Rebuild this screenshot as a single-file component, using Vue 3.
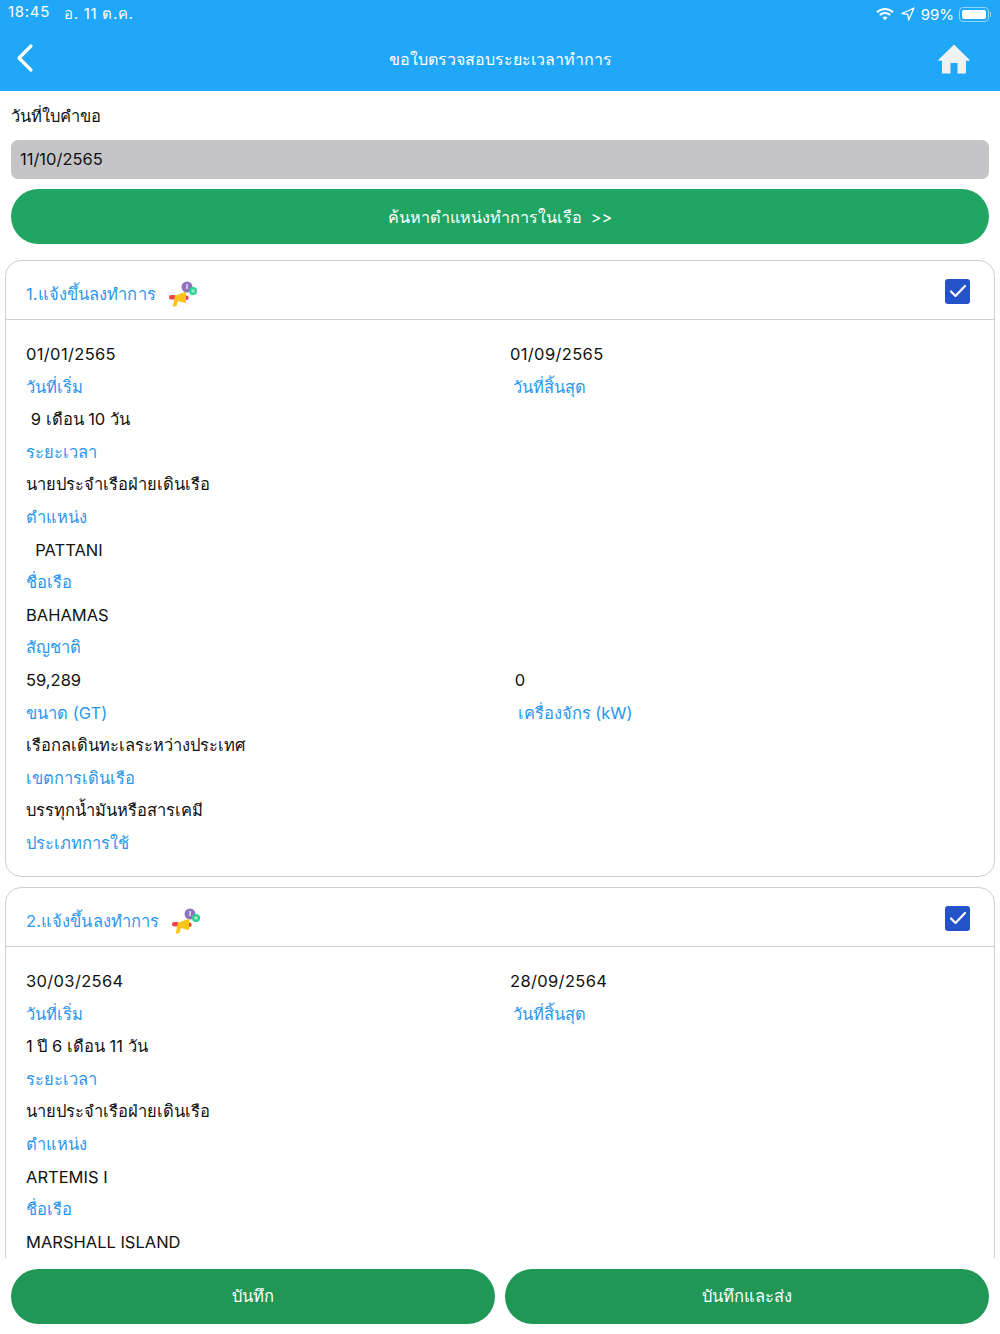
<script setup>
const isDate = (t) => /^\d\d\/\d\d\/\d{4}$/.test(t)
const cards = [
  {
    title: '1.แจ้งขึ้นลงทำการ',
    rows: [
      { l: ['01/01/2565', 'วันที่เริ่ม'], r: ['01/09/2565', 'วันที่สิ้นสุด'] },
      { l: ['\u00a09 เดือน 10 วัน', 'ระยะเวลา'] },
      { l: ['นายประจำเรือฝ่ายเดินเรือ', 'ตำแหน่ง'] },
      { l: ['\u00a0\u00a0PATTANI', 'ชื่อเรือ'] },
      { l: ['BAHAMAS', 'สัญชาติ'] },
      { l: ['59,289', 'ขนาด (GT)'], r: ['\u00a00', '\u00a0เครื่องจักร (kW)'] },
      { l: ['เรือกลเดินทะเลระหว่างประเทศ', 'เขตการเดินเรือ'] },
      { l: ['บรรทุกน้ำมันหรือสารเคมี', 'ประเภทการใช้'] }
    ]
  },
  {
    title: '2.แจ้งขึ้นลงทำการ',
    rows: [
      { l: ['30/03/2564', 'วันที่เริ่ม'], r: ['28/09/2564', 'วันที่สิ้นสุด'] },
      { l: ['1 ปี 6 เดือน 11 วัน', 'ระยะเวลา'] },
      { l: ['นายประจำเรือฝ่ายเดินเรือ', 'ตำแหน่ง'] },
      { l: ['ARTEMIS I', 'ชื่อเรือ'] },
      { l: ['MARSHALL ISLAND', 'สัญชาติ'] }
    ]
  }
]
</script>

<template>
  <div class="screen">
    <header class="top">
      <div class="status">
        <div class="status-left"><span>18:45</span><span>อ. 11 ต.ค.</span></div>
        <div class="status-right">
          <svg width="18" height="14" viewBox="0 0 18 14"><path d="M1 5.2a11.5 11.5 0 0 1 16 0" fill="none" stroke="#fff" stroke-width="2"/><path d="M3.8 8a7.5 7.5 0 0 1 10.4 0" fill="none" stroke="#fff" stroke-width="2"/><path d="M6.5 10.6a3.6 3.6 0 0 1 5 0L9 13.2z" fill="#fff"/></svg>
          <svg class="loc" width="14" height="14" viewBox="0 0 14 14"><path d="M13 1 1 6.5l5.8.8.9 5.700z" fill="none" stroke="#fff" stroke-width="1.300" stroke-linejoin="round"/></svg>
          <span class="pct">99%</span>
          <div class="battery"><div class="fill"></div></div>
          <div class="nub"></div>
        </div>
      </div>
      <div class="nav">
        <svg class="back" width="20" height="30" viewBox="0 0 20 30"><path d="M16 3 4 15l12 12" fill="none" stroke="#fff" stroke-width="3.200" stroke-linecap="round" stroke-linejoin="round"/></svg>
        <div class="nav-title">ขอใบตรวจสอบระยะเวลาทำการ</div>
        <svg class="home" width="34" height="32" viewBox="0 0 34 32"><path d="M17 1.500 1.500 16.800a.6.6 0 0 0 .4 1H5V30.500h8.500V20h7v10.500H29V17.800h3.100a.6.600 0 0 0 .4-1z" fill="#eff1f3"/></svg>
      </div>
    </header>

    <main class="content">
      <div class="form">
        <div class="field-label">วันที่ใบคำขอ</div>
        <div class="input">11/10/2565</div>
        <div class="search pill">ค้นหาตำแหน่งทำการในเรือ &nbsp;&gt;&gt;</div>
      </div>

      <section v-for="card in cards" :key="card.title" class="card">
        <div class="card-head">
          <span class="card-title">{{ card.title }}</span>
          <svg class="horn" width="32" height="28" viewBox="0 0 32 28">
            <circle cx="20" cy="7" r="5.500" fill="#8f72bd"/>
            <rect x="19.300" y="4" width="1.500" height="5" fill="#e6e0f2"/>
            <circle cx="26" cy="11" r="4" fill="#2fd08f"/>
            <rect x="24.500" y="9.500" width="3" height="3" fill="#a6eccf"/>
            <rect x="2" y="15" width="7" height="4.500" rx="2.200" fill="#f0404a"/>
            <rect x="18" y="15.500" width="3.500" height="4.500" rx="1.800" fill="#f0404a"/>
            <path d="M8 15.700 19 11.700V23.300L11 21l-1.500 5-3.800.7L7 20.500z" fill="#fcc419"/>
          </svg>
          <span class="check">
            <svg width="18" height="14" viewBox="0 0 18 14"><path d="M2 7.500 6.500 12 16 2" fill="none" stroke="#fff" stroke-width="2.200" stroke-linecap="round" stroke-linejoin="round"/></svg>
          </span>
        </div>
        <div class="card-body">
          <div v-for="(row, i) in card.rows" :key="i" class="row">
            <div class="cell">
              <div :class="['val', { date: isDate(row.l[0]) }]">{{ row.l[0] }}</div>
              <div class="lab">{{ row.l[1] }}</div>
            </div>
            <div v-if="row.r" class="cell">
              <div :class="['val', { date: isDate(row.r[0]) }]">{{ row.r[0] }}</div>
              <div class="lab indent">{{ row.r[1] }}</div>
            </div>
          </div>
        </div>
      </section>
    </main>

    <footer class="foot">
      <div class="save pill">บันทึก</div>
      <div class="save pill">บันทึกและส่ง</div>
    </footer>
  </div>
</template>

<style>
html, body { margin: 0; background: #fff; }
</style>

<style scoped>
.screen {
  width: 1000px;
  height: 1334px;
  display: flex;
  flex-direction: column;
  overflow: hidden;
  background: #fff;
  font-family: Inter, "Noto Sans", "DejaVu Sans", sans-serif;
  font-size: 16.5px;
  color: #111;
}
.top { height: 91px; flex: none; background: #20a7f7; color: #fff; }
.status {
  height: 28px;
  display: flex;
  justify-content: space-between;
  align-items: center;
  padding: 0 9px 0 8px;
  font-size: 15px;
  box-sizing: border-box;
}
.status-left { display: flex; gap: 14px; letter-spacing: .7px; }
.status-right { display: flex; align-items: center; }
.loc { margin-left: 7px; }
.pct { margin-left: 6px; }
.battery {
  width: 30px; height: 15px; margin-left: 5px; padding: 2px;
  border: 1px solid #8fd4fb; border-radius: 4px; box-sizing: border-box;
}
.fill { width: 100%; height: 100%; background: #fff; border-radius: 2px; }
.nub { width: 1px; height: 5px; background: #8fd4fb; margin-left: 1px; }
.nav { height: 63px; display: flex; align-items: center; padding: 0 29px 0 15px; position: relative; }
.back { margin-top: -3px; }
.home { margin-left: auto; margin-top: -2px; }
.nav-title { position: absolute; left: 0; right: 0; text-align: center; font-size: 16px; }
.content { flex: 1; min-height: 0; overflow: hidden; }
.form { padding: 13px 11px 0; }
.field-label { height: 36px; line-height: 25px; }
.input {
  height: 39px; line-height: 38px; padding-left: 9px;
  background: #c5c5c7; border-radius: 7px;
}
.pill {
  display: flex; align-items: center; justify-content: center;
  height: 55px; border-radius: 28px; color: #fff;
}
.search { margin-top: 10px; background: #20a563; font-size: 16.200px; }
.card {
  margin: 16px 5px 0;
  border: 1px solid #cfcfcf;
  border-radius: 16px;
  height: 617px;
  box-sizing: border-box;
}
.card + .card { margin-top: 10px; }
.card-head {
  height: 58px;
  display: flex;
  align-items: center;
  padding: 0 24px 0 20px;
  border-bottom: 1px solid #cfcfcf;
}
.card-title { color: #2b96ee; margin-top: 8px; letter-spacing: .1px; }
.horn { margin-left: 11px; margin-top: 7px; }
.check {
  margin-left: auto;
  margin-top: 2px;
  width: 25px; height: 25px;
  background: #2352c9;
  border-radius: 3px;
  display: flex; align-items: center; justify-content: center;
}
.card-body { padding: 18px 20px 0; }
.row { display: flex; }
.cell { width: 484px; flex: none; }
.val, .lab { height: 32.6px; line-height: 32.6px; white-space: pre; }
.date { letter-spacing: .35px; }
.lab { color: #2b96ee; }
.indent { padding-left: 3px; }
.foot {
  flex: none;
  height: 76px;
  display: grid;
  grid-template-columns: 1fr 1fr;
  gap: 10px;
  padding: 11px 11px 0;
  box-sizing: border-box;
  background: #fff;
}
.save { background: #209755; padding-bottom: 2px; box-sizing: border-box; }
</style>
